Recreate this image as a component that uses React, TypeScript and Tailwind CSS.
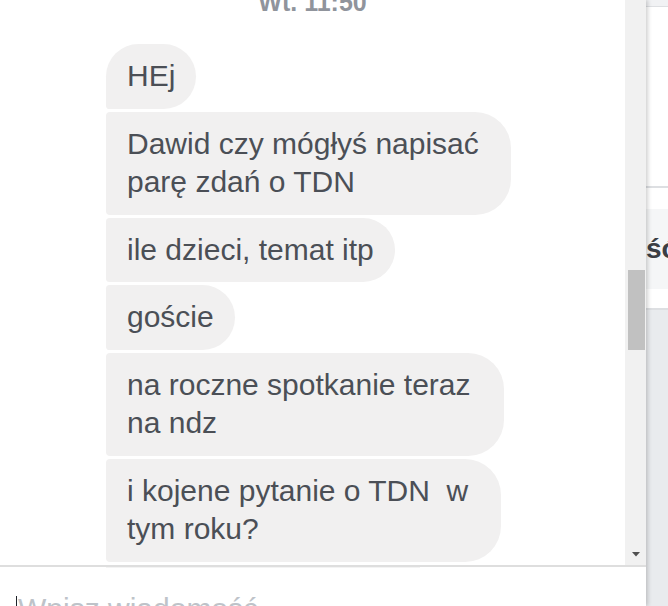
import React from "react";

interface Message {
  text: string;
  // fixed widths for wrapped bubbles so the right edge lands where it should
  width?: string;
  corners: string;
}

const messages: Message[] = [
  { text: "HEj", corners: "rounded-tl-[36px] rounded-bl-[4px]" },
  { text: "Dawid czy mógłyś napisać parę zdań o TDN", width: "w-[405px]", corners: "rounded-l-[4px]" },
  { text: "ile dzieci, temat itp", corners: "rounded-l-[4px]" },
  { text: "goście", corners: "rounded-l-[4px]" },
  { text: "na roczne spotkanie teraz na ndz", width: "w-[398px]", corners: "rounded-l-[4px]" },
  { text: "i kojene pytanie o TDN  w tym roku?", width: "w-[395px]", corners: "rounded-l-[4px]" },
];

function Bubble({ msg }: { msg: Message }) {
  return (
    <div
      className={`self-start shrink-0 mt-[3px] first:mt-0 bg-[#f1f0f0] text-[#4b4f56] text-[30px] leading-[38.5px] px-[21px] py-[13px] whitespace-pre-wrap rounded-r-[36px] ${msg.corners} ${msg.width ?? ""}`}
    >
      {msg.text}
    </div>
  );
}

function Scrollbar() {
  return (
    <div className="w-[21px] h-full shrink-0 bg-[#f1f1f1] flex flex-col items-center">
      <div className="w-[17px] h-[80px] mt-[270px] ml-[1px] bg-[#c1c1c1]" />
      <div className="flex-1" />
      {/* down arrow */}
      <svg width="8" height="5" viewBox="0 0 8 5" className="mb-[8px] ml-[1px]">
        <path d="M0 0 H8 L4 4.5 Z" fill="#505050" />
      </svg>
    </div>
  );
}

export default function App() {
  return (
    <div className="w-[668px] h-[606px] flex overflow-hidden bg-white font-['Liberation_Sans',Arial,sans-serif]">
      {/* chat panel */}
      <div className="relative z-10 w-[646px] h-full shrink-0 flex flex-col bg-white shadow-[2px_0_4px_rgba(0,0,0,0.18)]">
        <div className="h-[565px] shrink-0 flex overflow-hidden">
          <div className="w-[625px] flex flex-col">
            <div className="-mt-[12px] shrink-0 text-center text-[25px] leading-[28px] font-bold text-[#90949c]">
              Wt. 11:50
            </div>
            <div className="mt-[28px] pl-[106px] flex flex-col">
              {messages.map((m, i) => (
                <Bubble key={i} msg={m} />
              ))}
            </div>
          </div>
          <Scrollbar />
        </div>
        <div className="h-[2px] shrink-0 bg-[#dedede]" />
        <div className="flex-1 min-h-0 overflow-hidden flex flex-col">
          <div className="h-px shrink-0 ml-[106px] w-[314px] bg-[#f3f3f3]" />
          <div className="flex items-start shrink-0 pl-[16px] pt-[22px]">
            <div className="w-px h-[22px] mt-[6px] bg-[#1d2129]" />
            <div className="ml-[1px] text-[30px] leading-[38px] text-[#bec3c9] whitespace-nowrap">
              Wpisz wiadomość...
            </div>
          </div>
        </div>
      </div>

      {/* neighbouring panel, mostly hidden */}
      <div className="w-[22px] h-full flex flex-col bg-white overflow-hidden">
        <div className="h-[6px] shrink-0 bg-[#f1f2f4]" />
        <div className="h-px shrink-0 bg-[#dddfe2]" />
        <div className="h-[179px] shrink-0 bg-white" />
        <div className="h-[2px] shrink-0 bg-[#dddfe2]" />
        <div className="h-[21px] shrink-0" />
        <div className="h-[80px] shrink-0 bg-[#f5f6f7] flex items-center">
          <span className="text-[28px] font-bold leading-none text-[#3b3e44] whitespace-nowrap">śó</span>
        </div>
        <div className="h-[19px] shrink-0" />
        <div className="h-[2px] shrink-0 bg-[#dddfe2]" />
        <div className="flex-1 bg-[#e9ebee]" />
      </div>
    </div>
  );
}
